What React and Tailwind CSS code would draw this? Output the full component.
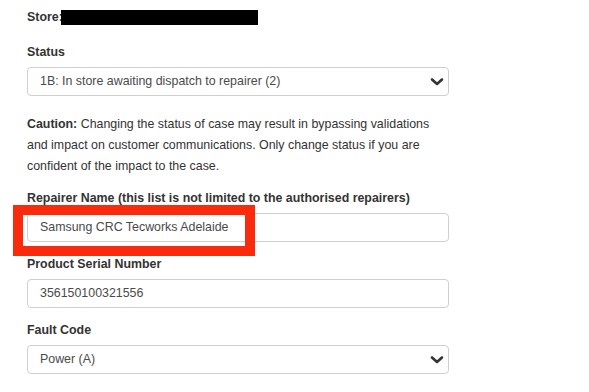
const Chevron = () => (
  <svg
    className="pointer-events-none absolute right-[4px] top-1/2 -translate-y-1/2"
    width="14"
    height="10"
    viewBox="0 0 14 10"
    fill="none"
  >
    <path d="M2 2.5l5 4.5 5-4.5" stroke="#333" strokeWidth="2.6" strokeLinecap="round" strokeLinejoin="round" />
  </svg>
);

const SelectBox = ({ value }) => (
  <div className="relative h-[29px] w-[422px] rounded-[4px] border border-[#cfcfcf] bg-white">
    <div className="flex h-full items-center pl-[12px] text-[12.4px] text-[#4a4a4a]">{value}</div>
    <Chevron />
  </div>
);

const TextBox = ({ value }) => (
  <div className="flex h-[29px] w-[422px] items-center rounded-[4px] border border-[#cfcfcf] bg-white pl-[12px] text-[12.4px] text-[#4a4a4a]">
    {value}
  </div>
);

const Label = ({ children }) => (
  <div className="mb-[6px] h-[18px] text-[12.4px] font-bold leading-[18px] text-[#333]">{children}</div>
);

export default function App() {
  return (
    <div className="h-[392px] w-[589px] overflow-hidden bg-white pl-[27px] pt-[8px] font-['Liberation_Sans',Arial,sans-serif]">
      <div className="flex h-[18px] items-center text-[12.4px] font-bold text-[#333]">
        <span>Store:</span>
        <span className="ml-[-2px] inline-block h-[15px] w-[197px] bg-black" />
      </div>

      <div className="mt-[17px]">
        <Label>Status</Label>
        <SelectBox value="1B: In store awaiting dispatch to repairer (2)" />
      </div>

      <p className="mt-[18px] w-[412px] text-[12.4px] leading-[21px] text-[#333]">
        <span className="font-bold">Caution:</span> Changing the status of case may result in bypassing validations
        and impact on customer communications. Only change status if you are confident of the impact to the case.
      </p>

      <div className="mt-[12px]">
        <Label>Repairer Name (this list is not limited to the authorised repairers)</Label>
        <div className="relative">
          <TextBox value="Samsung CRC Tecworks Adelaide" />
          <div className="absolute left-[-14px] top-[-8px] h-[51px] w-[242px] border-[10px] border-[#fa2a0c]" />
        </div>
      </div>

      <div className="mt-[13px]">
        <Label>Product Serial Number</Label>
        <TextBox value="356150100321556" />
      </div>

      <div className="mt-[13px]">
        <Label>Fault Code</Label>
        <SelectBox value="Power (A)" />
      </div>
    </div>
  );
}
